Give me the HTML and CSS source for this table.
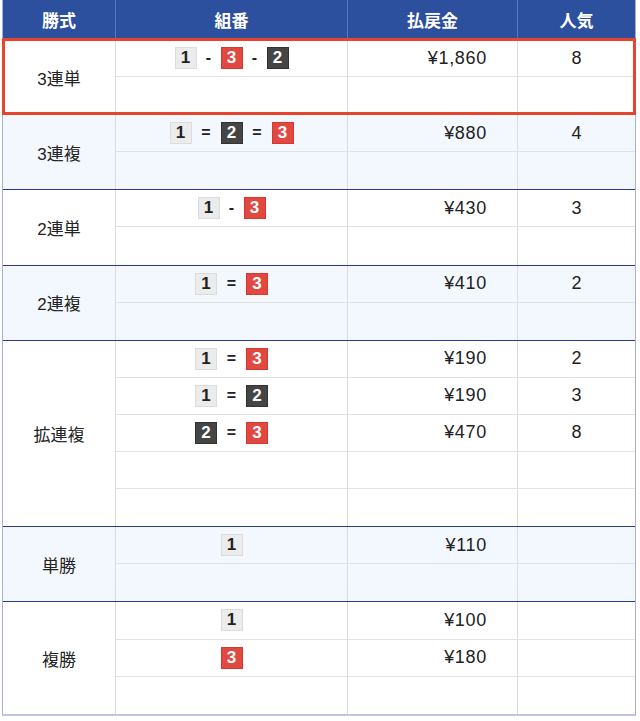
FILE: index.html
```html
<!DOCTYPE html>
<html lang="ja">
<head>
<meta charset="utf-8">
<link rel="stylesheet" href="styles.css">
</head>
<body>
<div class="table">
  <div class="head">
    <div class="hc">勝式</div>
    <div class="hc">組番</div>
    <div class="hc">払戻金</div>
    <div class="hc">人気</div>
  </div>

  <div class="group hl r2">
    <div class="label">3連単</div>
    <div class="c combo"><span class="b w">1</span><span class="sep">-</span><span class="b r">3</span><span class="sep">-</span><span class="b k">2</span></div>
    <div class="c amt">¥1,860</div>
    <div class="c pop">8</div>
    <div class="c"></div><div class="c"></div><div class="c"></div>
  </div>

  <div class="group alt r2">
    <div class="label">3連複</div>
    <div class="c combo"><span class="b w">1</span><span class="sep eq">=</span><span class="b k">2</span><span class="sep eq">=</span><span class="b r">3</span></div>
    <div class="c amt">¥880</div>
    <div class="c pop">4</div>
    <div class="c"></div><div class="c"></div><div class="c"></div>
  </div>

  <div class="group r2">
    <div class="label">2連単</div>
    <div class="c combo"><span class="b w">1</span><span class="sep">-</span><span class="b r">3</span></div>
    <div class="c amt">¥430</div>
    <div class="c pop">3</div>
    <div class="c"></div><div class="c"></div><div class="c"></div>
  </div>

  <div class="group alt r2">
    <div class="label">2連複</div>
    <div class="c combo"><span class="b w">1</span><span class="sep eq">=</span><span class="b r">3</span></div>
    <div class="c amt">¥410</div>
    <div class="c pop">2</div>
    <div class="c"></div><div class="c"></div><div class="c"></div>
  </div>

  <div class="group r5">
    <div class="label">拡連複</div>
    <div class="c combo"><span class="b w">1</span><span class="sep eq">=</span><span class="b r">3</span></div>
    <div class="c amt">¥190</div>
    <div class="c pop">2</div>
    <div class="c combo"><span class="b w">1</span><span class="sep eq">=</span><span class="b k">2</span></div>
    <div class="c amt">¥190</div>
    <div class="c pop">3</div>
    <div class="c combo"><span class="b k">2</span><span class="sep eq">=</span><span class="b r">3</span></div>
    <div class="c amt">¥470</div>
    <div class="c pop">8</div>
    <div class="c"></div><div class="c"></div><div class="c"></div>
    <div class="c"></div><div class="c"></div><div class="c"></div>
  </div>

  <div class="group alt r2">
    <div class="label">単勝</div>
    <div class="c combo"><span class="b w">1</span></div>
    <div class="c amt">¥110</div>
    <div class="c pop"></div>
    <div class="c"></div><div class="c"></div><div class="c"></div>
  </div>

  <div class="group r3 last">
    <div class="label">複勝</div>
    <div class="c combo"><span class="b w">1</span></div>
    <div class="c amt">¥100</div>
    <div class="c pop"></div>
    <div class="c combo"><span class="b r">3</span></div>
    <div class="c amt">¥180</div>
    <div class="c pop"></div>
    <div class="c"></div><div class="c"></div><div class="c"></div>
  </div>
</div>
</body>
</html>
```

FILE: styles.css
```css
html, body {
  margin: 0;
  padding: 0;
  background: #ffffff;
}
body {
  font-family: "Liberation Sans", "Noto Sans CJK JP", sans-serif;
  color: #222222;
  font-size: 18px;
}
.table {
  width: 634px;
  margin-left: 2px;
  border-left: 1px solid #a7aedb;
  border-right: 1px solid #a7aedb;
  border-bottom: 2px solid #bfc4e3;
  box-sizing: border-box;
}
.head {
  display: grid;
  grid-template-columns: 113px 232px 170px 1fr;
  height: 39px;
  background: #2c4f9e;
}
.hc {
  display: flex;
  align-items: center;
  justify-content: center;
  color: #ffffff;
  font-weight: bold;
  font-size: 17px;
  font-family: "Noto Sans CJK JP", sans-serif;
  border-right: 1px solid #5a78bd;
}
.hc:last-child { border-right: none; }

.group {
  display: grid;
  grid-template-columns: 113px 232px 170px 1fr;
  border-top: 1px solid #2a3a8e;
  background: #ffffff;
}
.group.alt { background: #f3f7fe; }
.r2 { grid-template-rows: repeat(2, 37.1px); }
.r3 { grid-template-rows: repeat(3, 37.1px); }
.r5 { grid-template-rows: repeat(5, 37.1px); }
.r2 .label { grid-row: 1 / span 2; }
.r3 .label { grid-row: 1 / span 3; }
.r5 .label { grid-row: 1 / span 5; }

.group.hl {
  outline: 3px solid #e8432d;
  outline-offset: -2px;
  position: relative;
  z-index: 1;
}

.label {
  grid-column: 1;
  display: flex;
  align-items: center;
  justify-content: center;
  font-size: 17px;
  border-right: 1px solid #dcdcdc;
}
.c {
  display: flex;
  align-items: center;
  border-right: 1px solid #dcdcdc;
  border-bottom: 1px solid #e2e2e2;
  box-sizing: border-box;
}
.c:nth-child(3n+1) { border-right: none; }
.group > .c:nth-last-child(-n+3) { border-bottom: none; }
.combo { justify-content: center; }
.amt {
  justify-content: flex-end;
  padding-right: 30px;
  letter-spacing: 0.7px;
}
.pop { justify-content: center; }

.b {
  display: inline-flex;
  align-items: center;
  justify-content: center;
  width: 22px;
  height: 22px;
  box-sizing: border-box;
  font-weight: bold;
  font-size: 17px;
  border: 1px solid transparent;
}
.b.w {
  background: #ececec;
  border-color: #dcdcdc;
  color: #222222;
}
.b.r {
  background: #e04840;
  border-color: #d4382f;
  color: #ffffff;
}
.b.k {
  background: #454545;
  border-color: #333333;
  color: #ffffff;
}
.sep {
  display: inline-block;
  width: 24px;
  text-align: center;
  font-weight: bold;
  font-size: 16px;
}
.sep.eq {
  width: 29px;
}
```
